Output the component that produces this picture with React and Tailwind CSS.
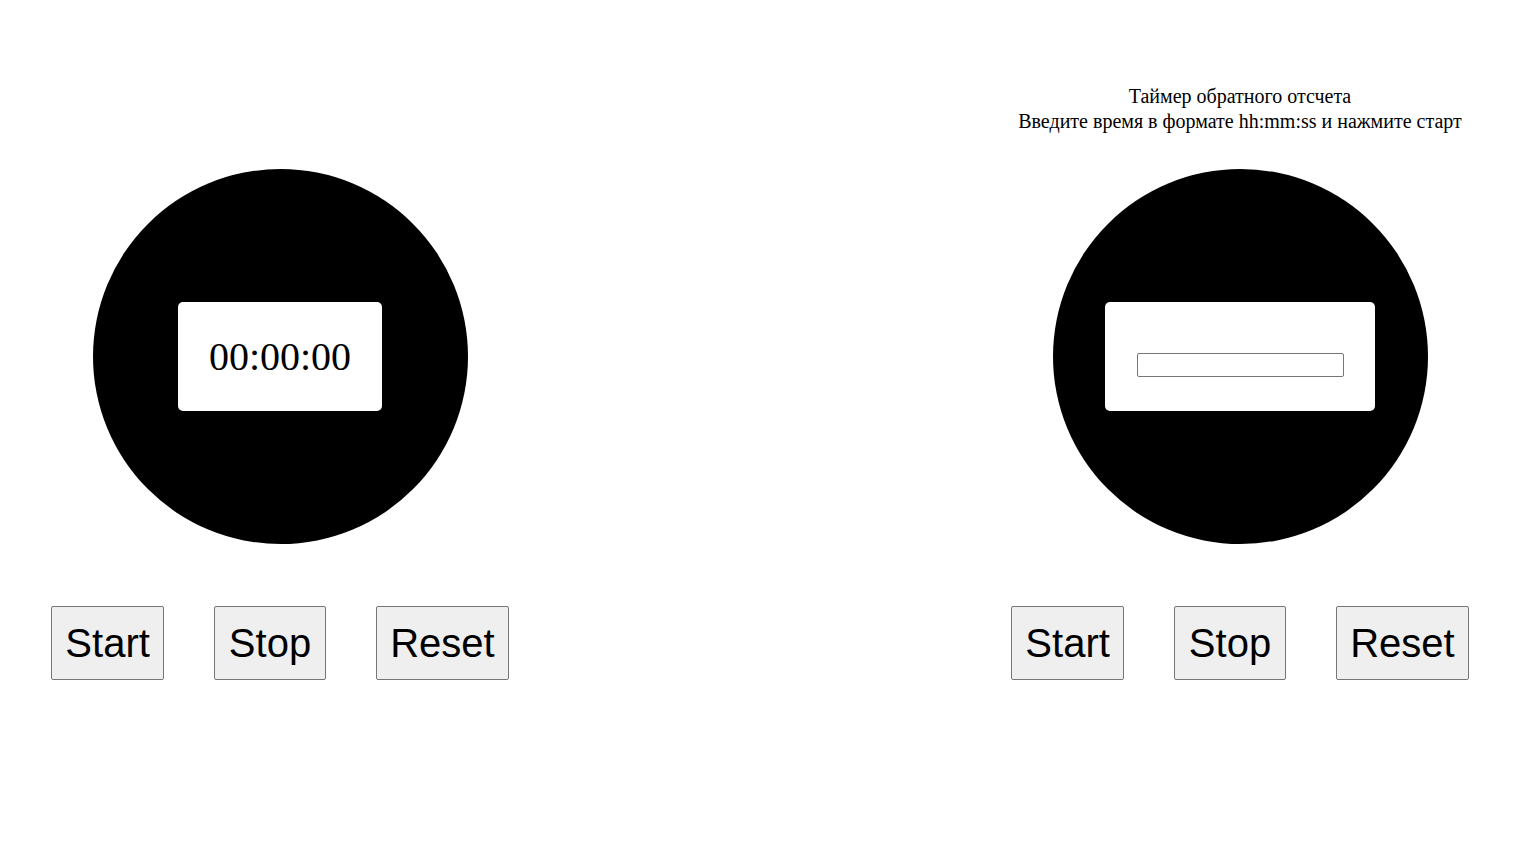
import React from "react";

function Buttons() {
  const cls =
    "h-[74px] bg-[#efefef] border border-[#767676] rounded-[2px] text-[40px] leading-none text-black";
  return (
    <div className="flex gap-[50px] mt-[62px]" style={{ fontFamily: '"Liberation Sans", Arial, sans-serif' }}>
      <button className={cls + " px-[13px]"}>Start</button>
      <button className={cls + " px-[14px]"}>Stop</button>
      <button className={cls + " px-[13px]"}>Reset</button>
    </div>
  );
}

export default function App() {
  return (
    <div
      className="w-[1528px] h-[859px] bg-white flex justify-between pr-[8px] text-black"
      style={{ fontFamily: '"Liberation Serif", "Times New Roman", serif' }}
    >
      <div className="w-[560px] flex flex-col items-center pt-[169px]">
        <div className="w-[375px] h-[375px] rounded-full bg-black flex items-center justify-center">
          <div className="w-[204px] h-[109px] bg-white rounded-[5px] flex items-center justify-center text-[40px]">
            00:00:00
          </div>
        </div>
        <Buttons />
      </div>
      <div className="w-[560px] flex flex-col items-center pt-[84px]">
        <div className="text-[20px] leading-[25px] text-center h-[50px] mb-[35px] whitespace-nowrap">
          <div>Таймер обратного отсчета</div>
          <div>Введите время в формате hh:mm:ss и нажмите старт</div>
        </div>
        <div className="w-[375px] h-[375px] rounded-full bg-black flex items-center justify-center">
          <div className="w-[270px] h-[109px] bg-white rounded-[5px] flex justify-center pt-[51px]">
            <input
              type="text"
              className="w-[207px] h-[24px] border border-[#767676] rounded-[2px] bg-white px-[2px] text-[13px]"
            />
          </div>
        </div>
        <Buttons />
      </div>
    </div>
  );
}
